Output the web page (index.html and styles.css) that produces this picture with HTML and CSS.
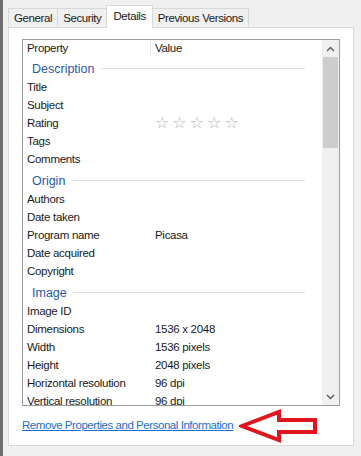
FILE: index.html
```html
<!DOCTYPE html>
<html lang="en">
  <head>
    <meta charset="UTF-8" />
    <title>Properties - Details</title>
    <link rel="stylesheet" href="styles.css">
  </head>
  <body>
    <div class="window">
      <div class="tabs">
        <div class="tab">General</div>
        <div class="tab">Security</div>
        <div class="tab active">Details</div>
        <div class="tab">Previous Versions</div>
      </div>
      <div class="panel">
        <div class="listbox">
          <div class="list">
            <div class="header">
              <div class="col-prop">Property</div>
              <div class="col-val">Value</div>
            </div>
            <div class="rows">
              <div class="group"><span>Description</span></div>
              <div class="row"><div class="prop">Title</div><div class="val"></div></div>
              <div class="row"><div class="prop">Subject</div><div class="val"></div></div>
              <div class="row">
                <div class="prop">Rating</div>
                <div class="val stars">&#9734;&#9734;&#9734;&#9734;&#9734;</div>
              </div>
              <div class="row"><div class="prop">Tags</div><div class="val"></div></div>
              <div class="row"><div class="prop">Comments</div><div class="val"></div></div>
              <div class="group"><span>Origin</span></div>
              <div class="row"><div class="prop">Authors</div><div class="val"></div></div>
              <div class="row"><div class="prop">Date taken</div><div class="val"></div></div>
              <div class="row"><div class="prop">Program name</div><div class="val">Picasa</div></div>
              <div class="row"><div class="prop">Date acquired</div><div class="val"></div></div>
              <div class="row"><div class="prop">Copyright</div><div class="val"></div></div>
              <div class="group"><span>Image</span></div>
              <div class="row"><div class="prop">Image ID</div><div class="val"></div></div>
              <div class="row"><div class="prop">Dimensions</div><div class="val">1536 x 2048</div></div>
              <div class="row"><div class="prop">Width</div><div class="val">1536 pixels</div></div>
              <div class="row"><div class="prop">Height</div><div class="val">2048 pixels</div></div>
              <div class="row"><div class="prop">Horizontal resolution</div><div class="val">96 dpi</div></div>
              <div class="row"><div class="prop">Vertical resolution</div><div class="val">96 dpi</div></div>
            </div>
          </div>
          <div class="scrollbar">
            <div class="arrow">
              <svg width="9" height="6" viewBox="0 0 9 6"><path d="M1 5 L4.5 1.5 L8 5" fill="none" stroke="#606060" stroke-width="1.5"/></svg>
            </div>
            <div class="thumb"></div>
            <div class="track"></div>
            <div class="arrow">
              <svg width="9" height="6" viewBox="0 0 9 6"><path d="M1 1 L4.5 4.5 L8 1" fill="none" stroke="#606060" stroke-width="1.5"/></svg>
            </div>
          </div>
        </div>
        <div class="footer">
          <a class="remove-link" href="#">Remove Properties and Personal Information</a>
          <svg class="red-arrow" width="80" height="34" viewBox="0 0 80 34">
            <path d="M3 17 L40 3 L40 11 L76 11 L76 23 L40 23 L40 31 Z" fill="none" stroke="#e0161e" stroke-width="4" stroke-linejoin="miter"/>
          </svg>
        </div>
      </div>
    </div>
  </body>
</html>
```

FILE: styles.css
```css
body {
  margin: 0;
  background-color: #f0f0f0;
  font-family: "Liberation Sans", Arial, sans-serif;
  font-size: 11.5px;
  letter-spacing: -0.3px;
  color: #1a1a1a;
}
.window {
  height: 456px;
  box-sizing: border-box;
  border-left: 3px solid #6f6f6f;
  padding: 5px 7px 0 5px;
}
.tabs {
  display: flex;
  align-items: flex-end;
  height: 22px;
  position: relative;
  z-index: 1;
}
.tab {
  height: 19px;
  line-height: 19px;
  padding: 0 5px;
  border: 1px solid #d9d9d9;
  border-bottom: none;
  margin-right: -1px;
  background-color: #f0f0f0;
  box-sizing: border-box;
  font-size: 11.5px;
  letter-spacing: -0.4px;
}
.tab.active {
  height: 23px;
  line-height: 21px;
  background-color: #ffffff;
  margin-bottom: -1px;
  padding: 0 6px;
}
.panel {
  background-color: #ffffff;
  border: 1px solid #d9d9d9;
  height: 419px;
  box-sizing: border-box;
  padding: 11px 13px 0 13px;
}
.listbox {
  display: flex;
  border: 1px solid #9c9c9c;
  height: 367px;
  box-sizing: border-box;
  overflow: hidden;
}
.list {
  flex: 1;
  overflow: hidden;
}
.header {
  display: flex;
  height: 16px;
  line-height: 16px;
}
.col-prop {
  width: 123px;
  padding-left: 4px;
  border-right: 1px solid #e5e5e5;
}
.col-val {
  padding-left: 4px;
}
.group {
  display: flex;
  align-items: center;
  height: 22px;
  padding: 3px 17px 0 9px;
  box-sizing: border-box;
  color: #2a58a8;
  font-size: 12.5px;
  letter-spacing: 0;
}
.group::after {
  content: "";
  flex: 1;
  height: 1px;
  margin-left: 6px;
  background-color: #dce3ec;
}
.row {
  display: flex;
  height: 18px;
  line-height: 18px;
}
.prop {
  width: 124px;
  padding-left: 4px;
  white-space: nowrap;
}
.val {
  padding-left: 4px;
}
.stars {
  color: #b8b8b8;
  font-family: "DejaVu Sans", sans-serif;
  font-size: 16px;
  letter-spacing: 3px;
  line-height: 18px;
}
.scrollbar {
  width: 17px;
  display: flex;
  flex-direction: column;
  background-color: #f0f0f0;
}
.arrow {
  height: 17px;
  display: flex;
  align-items: center;
  justify-content: center;
}
.thumb {
  height: 91px;
  margin: 0 1px;
  background-color: #cdcdcd;
}
.track {
  flex: 1;
}
.footer {
  display: flex;
  align-items: center;
  height: 38px;
}
.remove-link {
  color: #1a6fd0;
  text-decoration: underline;
  font-size: 11.5px;
  letter-spacing: -0.45px;
  white-space: nowrap;
}
.red-arrow {
  margin-left: 6px;
  margin-top: 2px;
}
```
